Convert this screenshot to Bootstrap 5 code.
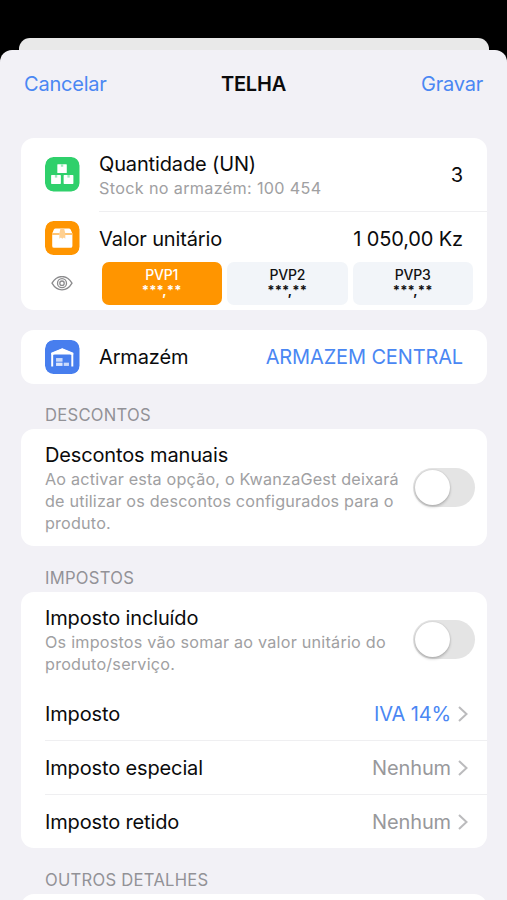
<!DOCTYPE html>
<html lang="pt">
<head>
<meta charset="utf-8">
<meta name="viewport" content="width=device-width, initial-scale=1">
<title>TELHA</title>
<link href="https://cdn.jsdelivr.net/npm/bootstrap@5.3.0/dist/css/bootstrap.min.css" rel="stylesheet">
<style>
body{background:#000;height:900px;overflow:hidden;font-family:Inter,"Liberation Sans",sans-serif;font-size:20px;line-height:26px;letter-spacing:-.14px;color:#0b0b0c}
.back-sheet{height:12px;margin:38px 18px 0 19px;background:#e9e9e9;border-radius:11px 11px 0 0}
.sheet{height:850px;background:#f2f1f6;border-radius:12px 12px 0 0;overflow:hidden}
.top-bar{height:88px;padding:21px 24px 0;display:grid;grid-template-columns:1fr auto 1fr;letter-spacing:-.22px}
.act{color:#4a87f3;text-decoration:none}
.panel{margin:0 20px 0 21px;background:#fff;border-radius:13px}
.tile{width:34.5px;height:34.5px;border-radius:8.5px;display:block;flex:none}
.sub{font-size:16.2px;line-height:22px;color:#a0a0a2;letter-spacing:.18px}
.sub.stock{letter-spacing:.33px}
.sub.tax{letter-spacing:.22px}
.sect{font-size:16.6px;line-height:20px;color:#929297;letter-spacing:.27px;padding-left:45px}
.side{width:78px;padding-left:24px;flex:none}
.qty-row{height:73px}
.line{border-top:1px solid #efeff1}
.price-row{height:54px}
.tier{border:0;border-radius:7px;height:43px;flex:1 1 0;background:#f2f5f9;font-size:14px;line-height:15px;font-weight:500;letter-spacing:-.2px;color:#111;padding:0 0 3px}
.tier.on{background:#ff9500;color:#fff}
.stars{font-size:13px;line-height:15px;font-weight:700;letter-spacing:.2px;padding-top:1px}
.toggle{width:62px;height:39px;border-radius:20px;background:#e4e4e4;padding:2px;flex:none}
.knob{width:35px;height:35px;border-radius:50%;background:#fff;box-shadow:0 2px 3px rgba(0,0,0,.2),0 0 2px rgba(0,0,0,.15)}
.nav-line{height:53px;margin-left:24px;padding-right:19px}
.muted{color:#98989b}
</style>
</head>
<body>
<div class="back-sheet"></div>
<main class="sheet">
  <header class="top-bar">
    <a class="act" href="#">Cancelar</a>
    <div class="fw-semibold">TELHA</div>
    <a class="act text-end" href="#">Gravar</a>
  </header>

  <section class="panel" style="height:172px">
    <div class="d-flex">
      <div class="side d-flex align-items-center">
        <svg class="tile" viewBox="0 0 35 35"><rect width="35" height="35" rx="8.5" fill="#2fd06b"/><g fill="#fff"><rect x="12.5" y="7.3" width="9.6" height="9" rx=".6"/><rect x="6.2" y="18.3" width="9.9" height="9" rx=".6"/><rect x="18.9" y="18.3" width="9.9" height="9" rx=".6"/></g><g fill="#9de9bc"><rect x="16.1" y="7.3" width="2.4" height="2.6"/><rect x="10" y="18.3" width="2.4" height="2.6"/><rect x="22.7" y="18.3" width="2.4" height="2.6"/></g></svg>
      </div>
      <div class="qty-row flex-fill d-flex align-items-center justify-content-between pe-4">
        <div><div>Quantidade (UN)</div><div class="sub stock">Stock no armazém: 100 454</div></div>
        <div>3</div>
      </div>
    </div>
    <div class="d-flex">
      <div class="side price-row d-flex align-items-center">
        <svg class="tile" viewBox="0 0 35 35"><rect width="35" height="35" rx="8.5" fill="#ff9500"/><path d="M10.700 7.500h13.500q1.200 0 1.800 1.100l1.800 4.100v12.600q0 1.900-1.900 1.900H9.200q-1.900 0-1.900-1.900V12.700l1.700-4.100q.6-1.100 1.700-1.100z" fill="#fff"/><path d="M7.300 13.200h7.600M20 13.200h7.700" stroke="#ffb145" stroke-width="1.500"/><path d="M15.700 7.500h3.700l1.200 5v5.500l-1.500-1.200-1.500 1.200-1.500-1.200-1.500 1.200v-5.500z" fill="#ffd090"/></svg>
      </div>
      <div class="price-row line flex-fill d-flex align-items-center justify-content-between pe-4">
        <div>Valor unitário</div><div>1 050,00 Kz</div>
      </div>
    </div>
    <div class="d-flex" style="margin-top:-3px">
      <div class="side d-flex align-items-center" style="padding-left:30px">
        <svg width="22" height="16" viewBox="0 0 22 16" fill="none" stroke="#8b8b8d" stroke-width="1.300"><path d="M1 8C3.500 3.700 7 1.300 11 1.300S18.500 3.700 21 8c-2.500 4.300-6 6.700-10 6.700S3.500 12.300 1 8z" transform="translate(0 -.8)"/><circle cx="11" cy="7.200" r="4.500"/><circle cx="11" cy="7.200" r="2.200"/></svg>
      </div>
      <div class="flex-fill d-flex" style="gap:5px;margin:0 14px 0 2.500px">
        <button class="tier on"><div>PVP1</div><div class="stars">***,**</div></button>
        <button class="tier"><div>PVP2</div><div class="stars">***,**</div></button>
        <button class="tier"><div>PVP3</div><div class="stars">***,**</div></button>
      </div>
    </div>
  </section>

  <section class="panel d-flex align-items-center" style="height:54px;margin-top:20px">
    <div class="side">
      <svg class="tile" viewBox="0 0 35 35"><rect width="35" height="35" rx="8.500" fill="#477eee"/><path d="M7.300 26.800V14.200L17.500 9.700l10.200 4.500v12.600" fill="none" stroke="#fff" stroke-width="2"/><path d="M6.300 14.600v-1.700L17.500 8.300l11.200 4.600v1.700z" fill="#fff"/><rect x="11.200" y="18.300" width="6.600" height="3.700" fill="#c9d9fb"/><rect x="11.200" y="23" width="6.600" height="3.300" fill="#dce6fd"/><rect x="19" y="23" width="5.300" height="3.300" fill="#c9d9fb"/></svg>
    </div>
    <div class="flex-fill">Armazém</div>
    <div class="act pe-4">ARMAZEM CENTRAL</div>
  </section>

  <div class="sect" style="margin-top:21px;height:24px">DESCONTOS</div>
  <section class="panel d-flex align-items-center" style="height:117px;padding:0 12px 0 24px">
    <div class="flex-fill"><div>Descontos manuais</div><div class="sub">Ao activar esta opção, o KwanzaGest deixará<br>de utilizar os descontos configurados para o<br>produto.</div></div>
    <div class="toggle"><div class="knob"></div></div>
  </section>

  <div class="sect" style="margin-top:22px;height:24px">IMPOSTOS</div>
  <section class="panel" style="height:256px">
    <div class="d-flex align-items-center" style="height:95px;padding:0 12px 0 24px">
      <div class="flex-fill"><div>Imposto incluído</div><div class="sub tax">Os impostos vão somar ao valor unitário do<br>produto/serviço.</div></div>
      <div class="toggle"><div class="knob"></div></div>
    </div>
    <div class="nav-line d-flex align-items-center"><div class="flex-fill">Imposto</div><div class="act">IVA 14%</div><svg style="margin-left:7px" width="10" height="18" viewBox="0 0 10 18" fill="none" stroke="#bbbbbd" stroke-width="2"><path d="M1 2L8.500 9 1 16"/></svg></div>
    <div class="line" style="margin-left:24px"></div>
    <div class="nav-line d-flex align-items-center"><div class="flex-fill">Imposto especial</div><div class="muted">Nenhum</div><svg style="margin-left:7px" width="10" height="18" viewBox="0 0 10 18" fill="none" stroke="#bbbbbd" stroke-width="2"><path d="M1 2L8.500 9 1 16"/></svg></div>
    <div class="line" style="margin-left:24px"></div>
    <div class="nav-line d-flex align-items-center"><div class="flex-fill">Imposto retido</div><div class="muted">Nenhum</div><svg style="margin-left:7px" width="10" height="18" viewBox="0 0 10 18" fill="none" stroke="#bbbbbd" stroke-width="2"><path d="M1 2L8.500 9 1 16"/></svg></div>
  </section>

  <div class="sect" style="margin-top:22px;height:24px">OUTROS DETALHES</div>
  <section class="panel" style="height:60px"></section>
</main>
<script src="https://cdn.jsdelivr.net/npm/bootstrap@5.3.0/dist/js/bootstrap.bundle.min.js"></script>
</body>
</html>
